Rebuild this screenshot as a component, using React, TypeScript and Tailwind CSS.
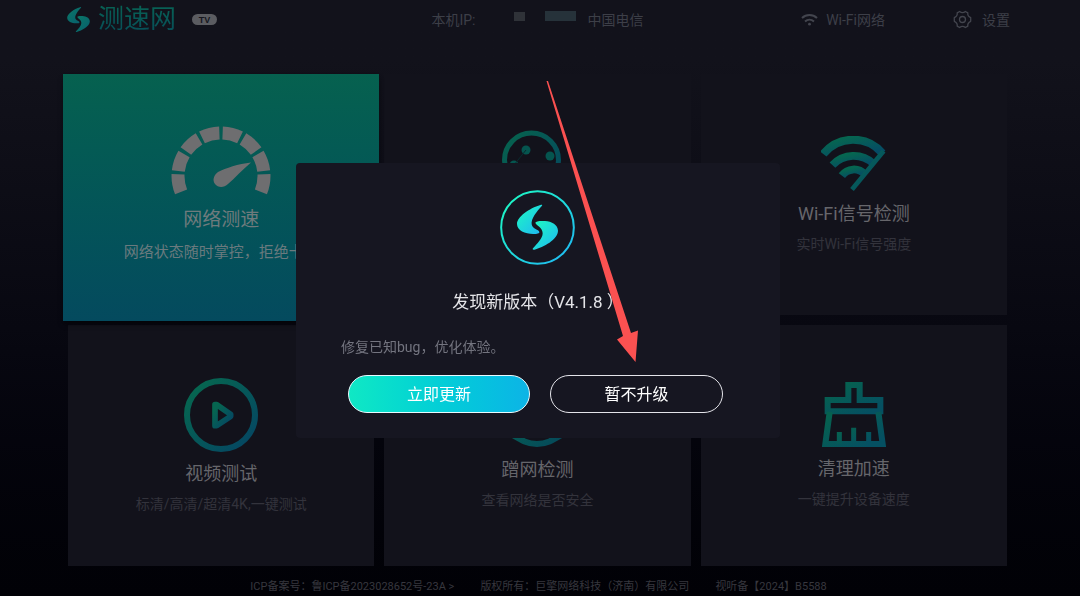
import React from "react";

const Gradient = ({ id, from, to }: { id: string; from: string; to: string }) => (
  <defs>
    <linearGradient id={id} x1="0" y1="0" x2="1" y2="1">
      <stop offset="0.1" stopColor={from} />
      <stop offset="0.9" stopColor={to} />
    </linearGradient>
  </defs>
);

const Mark = () => (
  <>
    <path d="M126 47C128 44 125 43 121 45C88 55 51 80 51 102C51 122 75 132 100 132C111 132 119 131 118 126C116 118 98 118 95 103C93 85 110 65 126 47Z" />
    <path d="M106 98C108 93 120 92 135 93C155 94 174 105 174 122C174 148 130 172 103 179C98 180 97 178 99 175C112 160 128 145 128 130C128 112 108 106 106 98Z" />
  </>
);

const GaugeIcon = () => (
  <svg className="h-[70px] w-[100px]" viewBox="0 0 100 70" fill="none">
    <path
      d="M10.1 65.9A43 43 0 1 1 89.9 65.9"
      stroke="#6e6e70"
      strokeWidth="13"
      pathLength="223.5"
      strokeDasharray="24 4.5"
    />
    <path
      d="M80 36.5C67 38 55 42 47 46C43 49 41 54 44 58C47 62 53 62 57 58C64 52 71 44 80 36.5Z"
      fill="#6e6e70"
    />
  </svg>
);

const SearchIcon = () => (
  <svg className="h-[66px] w-[70px]" viewBox="0 0 70 66" fill="none">
    <Gradient id="search" from="#06614f" to="#054a5e" />
    <g stroke="url(#search)" strokeWidth="5">
      <circle cx="29.5" cy="30" r="27" />
      <path d="M49 49L64 63" />
    </g>
    <g fill="#05554f">
      <circle cx="24" cy="20" r="4.5" />
      <circle cx="48" cy="26" r="4.5" />
      <circle cx="12" cy="35" r="4.5" />
    </g>
    <path d="M12 35L24 20" stroke="#0a2a2e" strokeWidth="1" />
  </svg>
);

const WifiSignalIcon = () => (
  <svg className="h-[56px] w-[65px]" viewBox="0 0 193 165" fill="none">
    <Gradient id="signal" from="#066650" to="#054a66" />
    <g stroke="url(#signal)">
      <path d="M7 53A114 114 0 0 1 182 50" strokeWidth="24" />
      <path d="M34 86A86 86 0 0 1 156 82" strokeWidth="23" />
      <path d="M62 117A44 44 0 0 1 130 113" strokeWidth="23" />
      <path d="M186 44L92 158" strokeWidth="14" />
    </g>
  </svg>
);

const PlayIcon = () => (
  <svg className="h-[74px] w-[74px]" viewBox="0 0 222 222" fill="none">
    <Gradient id="play" from="#066650" to="#054862" />
    <g stroke="url(#play)" strokeLinejoin="round">
      <circle cx="111" cy="111" r="102" strokeWidth="18" />
      <path d="M93 80L98 80L140 109V115L98 143H93Z" strokeWidth="17" />
    </g>
  </svg>
);

const ShieldIcon = () => (
  <svg className="h-[66px] w-[74px]" viewBox="0 0 74 66" fill="none">
    <Gradient id="shield" from="#066650" to="#054a5a" />
    <path
      d="M4 24C14 6 60 6 70 24V48C58 54 50 62 37 62C24 62 16 54 4 48Z"
      stroke="url(#shield)"
      strokeWidth="6"
    />
  </svg>
);

const BroomIcon = () => (
  <svg className="h-[65px] w-[64px]" viewBox="0 0 192 195" fill="none">
    <Gradient id="broom" from="#06614f" to="#055062" />
    <g stroke="url(#broom)" strokeWidth="18">
      <path d="M79 54V9H113V54H175V88H17V54Z" />
      <path d="M23 90L10 186H182L169 90" />
      <path d="M52 150V186M95 137V186M140 150V186" strokeWidth="15" />
    </g>
  </svg>
);

const WifiIcon = () => (
  <svg className="h-[14px] w-[17px]" viewBox="0 0 17 14" fill="none" stroke="#43454e" strokeWidth="2">
    <path d="M1 5A11 11 0 0 1 16 5" />
    <path d="M4 8.4A7 7 0 0 1 13 8.4" />
    <circle cx="8.5" cy="11.2" r="1.4" fill="#43454e" stroke="none" />
  </svg>
);

const GearIcon = () => (
  <svg className="h-[19px] w-[19px]" viewBox="0 0 19 19" fill="none" stroke="#43454e" strokeWidth="1.3">
    <path
      d="M6.6 1.5Q9.5 3.8 12.4 1.5L14.8 2.9Q14.3 6.2 17.7 7.7V11.3Q14.3 12.8 14.8 16.1L12.4 17.5Q9.5 15.2 6.6 17.5L4.2 16.1Q4.7 12.8 1.3 11.3V7.7Q4.7 6.2 4.2 2.9Z"
      strokeLinejoin="round"
    />
    <circle cx="9.5" cy="9.5" r="3" />
  </svg>
);

const Card = ({ icon, title, desc }: { icon: React.ReactNode; title: string; desc: string }) => (
  <button className="flex flex-col items-center justify-center bg-[#12121b]">
    {icon}
    <span className="mt-2.5 text-lg leading-6 text-[#66666b]">{title}</span>
    <span className="mt-2 text-sm leading-5 text-[#33333c]">{desc}</span>
  </button>
);

const Header = () => (
  <header className="grid h-[39px] grid-cols-[1fr_auto_1fr] items-center text-sm text-[#3d3f48]">
    <div className="flex items-center">
      <svg className="h-[27px] w-[23px]" viewBox="50 43 125 137" fill="url(#brand)">
        <Gradient id="brand" from="#0a7567" to="#08606c" />
        <Mark />
      </svg>
      <span className="ml-2 bg-linear-to-b from-[#086454] to-[#084a58] bg-clip-text pb-0.5 text-[26px] leading-8 text-transparent">
        测速网
      </span>
      <span className="ml-4 flex h-[11px] w-[25px] items-center justify-center rounded-full bg-[#5b5c61] pt-px font-['Liberation_Sans'] text-[9px] leading-none font-bold text-[#15161e]">
        TV
      </span>
    </div>
    <div className="flex items-center pr-0.5">
      <span>本机IP:</span>
      <span className="mb-1.5 ml-[38px] h-[9px] w-[11px] bg-[#2f3238]" />
      <span className="mr-3 mb-2 ml-5 h-[10px] w-[31px] bg-[#26323a]" />
      <span>中国电信</span>
    </div>
    <div className="flex items-center justify-end">
      <button className="flex items-center gap-2">
        <WifiIcon />
        Wi-Fi网络
      </button>
      <button className="ml-[68px] flex items-center gap-2.5">
        <GearIcon />
        设置
      </button>
    </div>
  </header>
);

const UpdateDialog = () => (
  <div className="fixed inset-0 z-20 flex items-center justify-center pt-[5px] pr-1">
    <div
      role="dialog"
      aria-labelledby="update-title"
      className="relative flex w-[484px] flex-col rounded bg-[#161621] pt-[27px] pb-[25px]"
    >
      <svg className="mr-0.5 h-[75px] w-[75px] self-center" viewBox="0 0 225 225" fill="url(#logo)">
        <Gradient id="logo" from="#1df5c5" to="#1fbdf0" />
        <circle cx="112.5" cy="112.5" r="109" fill="none" stroke="url(#logo)" strokeWidth="6" />
        <Mark />
      </svg>
      <h2 id="update-title" className="mt-6 pt-px text-center text-[17px] leading-6 text-[#e4e4e8]">
        发现新版本（V4.1.8 ）
      </h2>
      <p className="mt-[23px] px-[45px] text-sm leading-5 text-[#73747f]">修复已知bug，优化体验。</p>
      <div className="mt-[18px] flex gap-5 pr-[57px] pl-[52px]">
        <button className="h-[38px] w-[182px] rounded-full border border-[#e8fbff] bg-linear-to-r from-[#10e8c4] to-[#0db4e6] pt-0.5 text-base text-white">
          立即更新
        </button>
        <button className="h-[38px] flex-1 rounded-full border border-[#e4e4ea] pt-0.5 text-base text-white">
          暂不升级
        </button>
      </div>
      <svg
        className="pointer-events-none absolute -top-[83px] left-[249px] h-[284px] w-[96px]"
        viewBox="0 0 96 284"
        fill="#fb5151"
      >
        <path d="M1.5 1L3 1L86 253L93 250.500L90.500 282L72 259.500L78 256Z" />
      </svg>
    </div>
  </div>
);

export default function App() {
  return (
    <div className="flex min-h-screen flex-col bg-linear-to-b from-[#12121b] from-10% via-[#080811] via-55% to-[#010106] pr-[70px] pl-[67px] font-['Roboto','Noto_Sans_CJK_SC',sans-serif]">
      <Header />
      <main className="mt-[35px] mr-[3px] ml-px grid flex-1 grid-cols-3 grid-rows-2 gap-2.5">
        <button className="z-10 -mx-[5px] -mb-[6px] flex flex-col items-center justify-center bg-linear-to-b from-[#06614f] to-[#044a5e] pb-2 shadow-md shadow-black/40">
          <GaugeIcon />
          <span className="mt-3 text-[19px] leading-6 text-[#6f7b7d]">网络测速</span>
          <span className="mt-2.5 text-[15px] leading-5 text-[#6a7a7e]">网络状态随时掌控，拒绝卡顿</span>
        </button>
        <button aria-label="search" className="flex items-center justify-center bg-[#12121b] pb-[64px]">
          <SearchIcon />
        </button>
        <Card icon={<WifiSignalIcon />} title="Wi-Fi信号检测" desc="实时Wi-Fi信号强度" />
        <Card icon={<PlayIcon />} title="视频测试" desc="标清/高清/超清4K,一键测试" />
        <Card icon={<ShieldIcon />} title="蹭网检测" desc="查看网络是否安全" />
        <Card icon={<BroomIcon />} title="清理加速" desc="一键提升设备速度" />
      </main>
      <footer className="flex h-[30px] items-center justify-center gap-[26px] pt-3 text-[11px] text-[#37373e]">
        <a href="#icp">ICP备案号：鲁ICP备2023028652号-23A &gt;</a>
        <span>版权所有：巨擎网络科技（济南）有限公司</span>
        <span>视听备【2024】B5588</span>
      </footer>
      <UpdateDialog />
    </div>
  );
}
